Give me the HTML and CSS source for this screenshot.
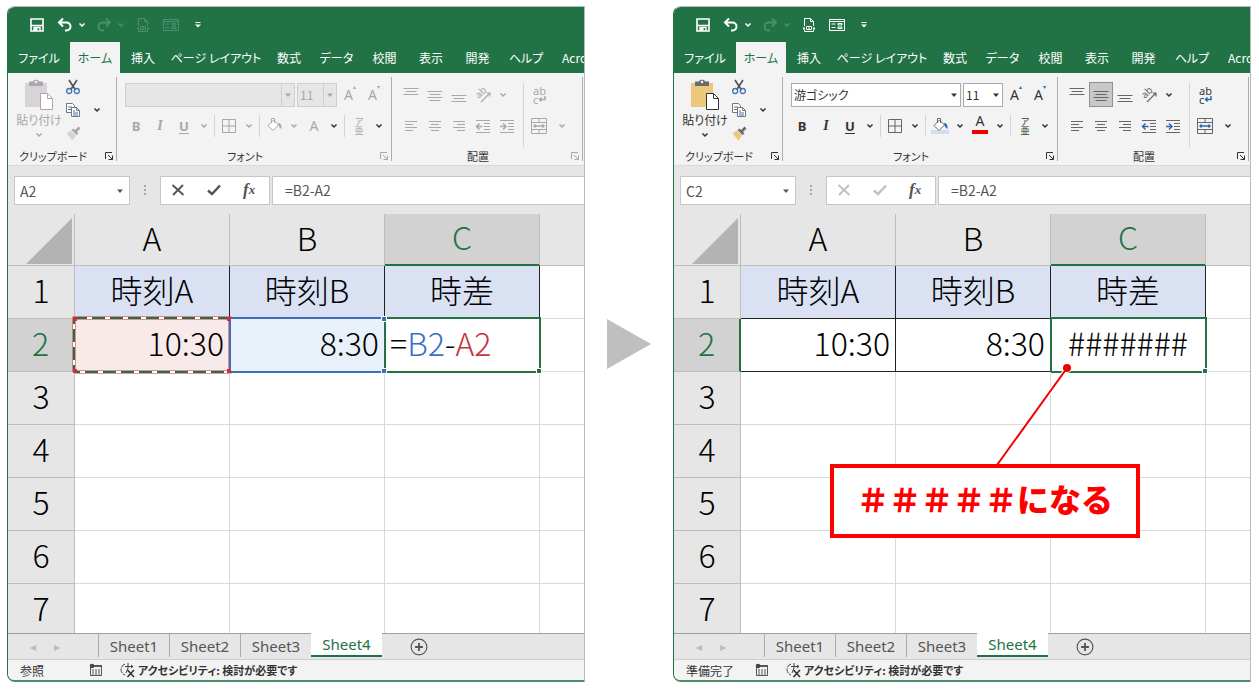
FILE: index.html
```html
<!DOCTYPE html>
<html lang="ja">
<head>
  <meta charset="UTF-8" />
  <meta name="viewport" content="width=device-width, initial-scale=1.0" />
  <title>時刻の差</title>
  <link rel="stylesheet" href="styles.css">
</head>
<body>
  <!-- shared icons -->
  <svg class="sprite" aria-hidden="true">
    <symbol id="i-save" viewBox="0 0 16 16"><path d="M2 2h12v12H2z" fill="none" stroke="currentColor" stroke-width="1.6"/><path d="M2 8.500h12M5 14v-3.500h6V14" fill="none" stroke="currentColor" stroke-width="1.400"/><path d="M5.500 11h3v3h-3z" fill="currentColor"/></symbol>
    <symbol id="i-undo" viewBox="0 0 16 16"><path d="M6 1.500L2 5.500l4 4M2.500 5.500h7a4 4 0 0 1 0 8H8" fill="none" stroke="currentColor" stroke-width="2"/></symbol>
    <symbol id="i-redo" viewBox="0 0 16 16"><path d="M10 1.500l4 4-4 4M13.500 5.500h-7a4 4 0 0 0 0 8H8" fill="none" stroke="currentColor" stroke-width="1.800"/></symbol>
    <symbol id="i-print" viewBox="0 0 16 16"><path d="M3.500 9V1.500h6l3 3V9M9.500 1.500v3h3M3.500 13v1.500h9V13" fill="none" stroke="currentColor"/><path d="M2 11.500h2M12 11.500h2" stroke="currentColor" stroke-width="2"/><path d="M5.500 9.500h5v3h-5zM8 9v4" fill="none" stroke="currentColor"/></symbol>
    <symbol id="i-form" viewBox="0 0 16 16"><path d="M.5 2.500h15v11H.5zM.5 4.500h15M2.500 7h4M2.500 10.500h4M9 6.500h4v1.500H9zM9 10h4v1.500H9z" fill="none" stroke="currentColor"/></symbol>
    <symbol id="i-more" viewBox="0 0 8 8"><path d="M1.500 1.500h5" stroke="currentColor"/><path d="M1 3.500h6L4 6.500z" fill="currentColor"/></symbol>
    <symbol id="i-chev" viewBox="0 0 8 8"><path d="M1.500 2.500L4 5l2.500-2.500" fill="none" stroke="currentColor" stroke-width="1.500"/></symbol>
    <symbol id="i-down" viewBox="0 0 8 8"><path d="M1 2.500h6L4 6z" fill="currentColor"/></symbol>
    <symbol id="i-paste" viewBox="0 0 28 32"><path class="board" d="M0 4h22v24H0z"/><path class="clip" d="M4 2.500h4C8 0 14 0 14 2.500h4V7H4z"/><circle cx="11" cy="3" r="1.300" fill="#f3f3f3"/><path d="M15.500 14.500h7l5 5v11h-12z" fill="#fff" stroke="currentColor"/><path d="M22.500 14.500v5h5" fill="none" stroke="currentColor"/></symbol>
    <symbol id="i-cut" viewBox="0 0 16 16"><path d="M4 1l6.500 10M12 1L5.500 11" stroke="#555" stroke-width="1.700"/><circle cx="4.200" cy="12" r="2.500" fill="none" stroke="#4472b4" stroke-width="1.300"/><circle cx="11.800" cy="12" r="2.500" fill="none" stroke="#4472b4" stroke-width="1.300"/></symbol>
    <symbol id="i-copy" viewBox="0 0 16 16"><path d="M1.500 1.500h6l2 2v7h-8z" fill="#fff" stroke="#777"/><path d="M3 5h4M3 7.500h3" stroke="#4472b4"/><path d="M6.500 5.500h5l3 3v6h-8z" fill="#fff" stroke="#777"/><path d="M11.500 5.500v3h3" fill="none" stroke="#777"/><path d="M8 9h2M8 11h5M8 13h5" stroke="#4472b4"/></symbol>
    <symbol id="i-brush" viewBox="0 0 16 16"><path class="bristle" d="M1.500 8.500L6 5.500l5 5-3.500 5z"/><path class="handle" d="M6.500 5l2-1.500L10 5l3.500-3.500 2 2L12 7l1.500 1.500-2 1.500z"/></symbol>
    <symbol id="i-launch" viewBox="0 0 10 10"><path d="M1.500 8V1.500H8M4 4l4.500 4.500M8.500 4.500v4h-4" fill="none" stroke="currentColor"/></symbol>
    <symbol id="i-border" viewBox="0 0 16 16"><path d="M1.500 1.500h13v13h-13zM8 1.500v13M1.500 8h13" fill="none" stroke="currentColor"/></symbol>
    <symbol id="i-fill" viewBox="0 0 18 18"><path class="bar" d="M0 13h18v4H0z"/><path d="M3 8.500L8.500 3l5 5L8 13.500zM6.500 6V1.500h3V6" fill="#fff" stroke="currentColor"/><path class="drop" d="M13 6c3 0 3.500 2 3.500 6-2-1-3-3-3.500-6z"/></symbol>
    <symbol id="i-top" viewBox="0 0 16 16"><path d="M.5 1.500h15M2.500 4.500h11M.5 7.500h15" stroke="currentColor"/></symbol>
    <symbol id="i-mid" viewBox="0 0 16 16"><path d="M.5 4.500h15M2.500 7.500h11M.5 10.500h15M2.500 13.500h11" stroke="currentColor"/></symbol>
    <symbol id="i-bottom" viewBox="0 0 16 16"><path d="M.5 8.500h15M2.500 11.500h11M.5 14.500h15" stroke="currentColor"/></symbol>
    <symbol id="i-left" viewBox="0 0 16 16"><path d="M2 3.500h12M2 6.500h8M2 9.500h12M2 12.500h8" stroke="currentColor"/></symbol>
    <symbol id="i-center" viewBox="0 0 16 16"><path d="M2 3.500h12M4 6.500h8M2 9.500h12M4 12.500h8" stroke="currentColor"/></symbol>
    <symbol id="i-right" viewBox="0 0 16 16"><path d="M2 3.500h12M6 6.500h8M2 9.500h12M6 12.500h8" stroke="currentColor"/></symbol>
    <symbol id="i-outdent" viewBox="0 0 16 16"><path d="M1 2.500h14M9 5.500h6M9 8.500h6M9 11.500h6M1 14.500h14" stroke="currentColor"/><path class="accent" d="M7.500 8.500H2M4.500 5.500l-3 3 3 3"/></symbol>
    <symbol id="i-indent" viewBox="0 0 16 16"><path d="M1 2.500h14M9 5.500h6M9 8.500h6M9 11.500h6M1 14.500h14" stroke="currentColor"/><path class="accent" d="M1 8.500h5.500M4 5.500l3 3-3 3"/></symbol>
    <symbol id="i-orient" viewBox="0 0 16 16"><text x="0" y="0" font-size="10" transform="translate(4 12) rotate(-45)" fill="currentColor">ab</text><path d="M6 15L15 6M11.500 6H15v3.500" fill="none" stroke="currentColor" stroke-width="1.200"/></symbol>
    <symbol id="i-return" viewBox="0 0 8 8"><path class="accent" d="M7 1v3.500H1.500M3.500 2.500l-2 2 2 2"/></symbol>
    <symbol id="i-merge" viewBox="0 0 16 16"><path d="M.5 .5h15v15H.5zM.5 4.500h15M.5 11.500h15M8 .5v4M8 11.500v4" fill="none" stroke="currentColor"/><path class="accent" d="M3 8h10M4.500 6.500L3 8l1.500 1.500M11.500 6.500L13 8l-1.500 1.500"/></symbol>
    <symbol id="i-x" viewBox="0 0 14 14"><path d="M1.500 2l11 10M12 2L2 12" stroke="currentColor" stroke-width="1.900"/></symbol>
    <symbol id="i-check" viewBox="0 0 14 14"><path d="M1 7.500L5 11l8-8.500" fill="none" stroke="currentColor" stroke-width="2.500"/></symbol>
    <symbol id="i-dots" viewBox="0 0 4 12"><path d="M1 1h2v2H1zM1 5h2v2H1zM1 9h2v2H1z" fill="#a6a6a6"/></symbol>
    <symbol id="i-plus" viewBox="0 0 16 16"><circle cx="8" cy="8" r="7" fill="none" stroke="currentColor"/><path d="M8 4.500v7M4.500 8h7" stroke="currentColor" stroke-width="1.600"/></symbol>
    <symbol id="i-macro" viewBox="0 0 14 14"><path d="M1.500 4v8.500h11V3M5 2.500h8" fill="none" stroke="#555"/><path d="M5 3h8" stroke="#555" stroke-width="2"/><circle cx="3" cy="3" r="2.300" fill="#444"/><path d="M3 7h8M3 9h8M3 11h8" stroke="#555" stroke-dasharray="2 1"/></symbol>
    <symbol id="i-access" viewBox="0 0 16 16"><path d="M5 2a5.800 5.800 0 0 0 0 11" fill="none" stroke="#444" stroke-dasharray="5 1"/><path d="M8 1v5M5 4.500h8M8 6l-2 5M11 3l2 1.500-2 1.500" fill="none" stroke="#444"/><path d="M7.500 8l6.500 7M14 8l-6.500 7" stroke="#333" stroke-width="1.600"/></symbol>
  </svg>

  <main class="compare">
    <section class="window editing">
      <div class="quick">
        <button aria-label="保存"><svg class="i16"><use href="#i-save"/></svg></button>
        <button class="undo" aria-label="元に戻す"><svg class="i16"><use href="#i-undo"/></svg><svg class="i8"><use href="#i-chev"/></svg></button>
        <button class="undo faint" aria-label="やり直し"><svg class="i16"><use href="#i-redo"/></svg><svg class="i8"><use href="#i-chev"/></svg></button>
        <button class="tool" aria-label="印刷プレビュー"><svg class="i16"><use href="#i-print"/></svg></button>
        <button class="tool" aria-label="フォーム"><svg class="i16"><use href="#i-form"/></svg></button>
        <button class="more" aria-label="カスタマイズ"><svg class="i8"><use href="#i-more"/></svg></button>
      </div>
      <nav class="tabs">
        <a href="#">ファイル</a><a href="#" class="active">ホーム</a><a href="#">挿入</a><a href="#">ページ レイアウト</a><a href="#">数式</a><a href="#">データ</a><a href="#">校閲</a><a href="#">表示</a><a href="#">開発</a><a href="#">ヘルプ</a><a href="#" class="last">Acrobat</a>
      </nav>
      <div class="ribbon">
        <div class="group clipboard">
          <div class="group-body">
            <button class="paste"><svg class="paste-icon"><use href="#i-paste"/></svg><span>貼り付け</span><svg class="i8"><use href="#i-chev"/></svg></button>
            <div class="clip-tools">
              <button aria-label="切り取り"><svg class="i16"><use href="#i-cut"/></svg></button>
              <button class="copy" aria-label="コピー"><svg class="i16"><use href="#i-copy"/></svg><svg class="i8"><use href="#i-chev"/></svg></button>
              <button class="brush" aria-label="書式のコピー"><svg class="i16"><use href="#i-brush"/></svg></button>
            </div>
          </div>
          <div class="group-foot"><span>クリップボード</span><button class="launch" aria-label="クリップボードの設定"><svg><use href="#i-launch"/></svg></button></div>
        </div>
        <div class="group font">
          <div class="group-body">
            <div class="row">
              <div class="combo family"><select aria-label="フォント" disabled><option></option></select><svg class="i8"><use href="#i-down"/></svg></div>
              <div class="combo size"><select aria-label="フォント サイズ" disabled><option>11</option></select><svg class="i8"><use href="#i-down"/></svg></div>
              <button class="btn grow">A<sup>▴</sup></button>
              <button class="btn grow">A<sup>▾</sup></button>
            </div>
            <div class="row">
              <button class="btn bold">B</button>
              <button class="btn italic">I</button>
              <button class="btn under">U</button>
              <button class="caret" aria-label="下線の種類"><svg class="i8"><use href="#i-chev"/></svg></button>
              <span class="sep"></span>
              <button class="btn" aria-label="罫線"><svg class="i16"><use href="#i-border"/></svg></button>
              <button class="caret" aria-label="罫線の種類"><svg class="i8"><use href="#i-chev"/></svg></button>
              <span class="sep"></span>
              <button class="btn" aria-label="塗りつぶし"><svg class="i18"><use href="#i-fill"/></svg></button>
              <button class="caret" aria-label="塗りつぶしの色"><svg class="i8"><use href="#i-chev"/></svg></button>
              <button class="btn color">A</button>
              <button class="caret on" aria-label="フォントの色"><svg class="i8"><use href="#i-chev"/></svg></button>
              <span class="sep"></span>
              <button class="btn ruby"><span>ア</span><span>亜</span></button>
              <button class="caret on" aria-label="ふりがな"><svg class="i8"><use href="#i-chev"/></svg></button>
            </div>
          </div>
          <div class="group-foot"><span>フォント</span><button class="launch" aria-label="フォントの設定"><svg><use href="#i-launch"/></svg></button></div>
        </div>
        <div class="group align">
          <div class="group-body">
            <div class="align-main">
              <div class="row">
                <button class="btn" aria-label="上揃え"><svg class="i16"><use href="#i-top"/></svg></button>
                <button class="btn middle" aria-label="上下中央揃え"><svg class="i16"><use href="#i-mid"/></svg></button>
                <button class="btn" aria-label="下揃え"><svg class="i16"><use href="#i-bottom"/></svg></button>
                <button class="btn" aria-label="方向"><svg class="i16"><use href="#i-orient"/></svg></button>
                <button class="caret" aria-label="方向の種類"><svg class="i8"><use href="#i-chev"/></svg></button>
              </div>
              <div class="row">
                <button class="btn" aria-label="左揃え"><svg class="i16"><use href="#i-left"/></svg></button>
                <button class="btn" aria-label="中央揃え"><svg class="i16"><use href="#i-center"/></svg></button>
                <button class="btn" aria-label="右揃え"><svg class="i16"><use href="#i-right"/></svg></button>
                <button class="btn" aria-label="インデントを減らす"><svg class="i16"><use href="#i-outdent"/></svg></button>
                <button class="btn" aria-label="インデントを増やす"><svg class="i16"><use href="#i-indent"/></svg></button>
              </div>
            </div>
            <div class="align-side">
              <div class="row"><button class="btn wrap"><span>ab</span><span>c<svg class="i8"><use href="#i-return"/></svg></span></button></div>
              <div class="row"><button class="btn" aria-label="セルを結合"><svg class="i16"><use href="#i-merge"/></svg></button><button class="caret" aria-label="結合の種類"><svg class="i8"><use href="#i-chev"/></svg></button></div>
            </div>
          </div>
          <div class="group-foot"><span>配置</span><button class="launch" aria-label="配置の設定"><svg><use href="#i-launch"/></svg></button></div>
        </div>
      </div>
      <div class="formula-bar">
        <div class="name-box"><input type="text" aria-label="名前ボックス" value="A2"><svg class="i8"><use href="#i-down"/></svg></div>
        <svg class="dots"><use href="#i-dots"/></svg>
        <div class="fx-buttons">
          <button class="entry" aria-label="キャンセル"><svg><use href="#i-x"/></svg></button>
          <button class="entry" aria-label="入力"><svg><use href="#i-check"/></svg></button>
          <button class="fx">f<small>x</small></button>
        </div>
        <input class="formula" type="text" aria-label="数式バー" value="=B2-A2">
      </div>
      <div class="sheet">
        <table>
          <colgroup><col class="c-num"><col class="c-data"><col class="c-data"><col class="c-data"><col></colgroup>
          <thead>
            <tr><th class="corner"><svg viewBox="0 0 46 46"><path d="M46 0v46H0z" fill="#b3b3b3"/></svg></th><th>A</th><th>B</th><th class="sel">C</th><th></th></tr>
          </thead>
          <tbody>
            <tr class="titles"><th>1</th><td>時刻A</td><td>時刻B</td><td>時差</td><td></td></tr>
            <tr class="values"><th class="sel">2</th>
              <td class="ref-a">10:30<svg class="ants"><rect class="red" width="100%" height="100%"/><rect class="white" width="100%" height="100%"/><rect class="dash" width="100%" height="100%"/></svg><i class="knob tl"></i><i class="knob tr"></i><i class="knob bl"></i><i class="knob br"></i></td>
              <td class="ref-b">8:30<i class="ring"></i><i class="knob tr"></i><i class="knob br"></i></td>
              <td class="cursor typing">=<span class="blue">B2</span>-<span class="red">A2</span><i class="ring"></i><i class="knob br"></i></td><td></td></tr>
            <tr><th>3</th><td></td><td></td><td></td><td></td></tr>
            <tr><th>4</th><td></td><td></td><td></td><td></td></tr>
            <tr><th>5</th><td></td><td></td><td></td><td></td></tr>
            <tr><th>6</th><td></td><td></td><td></td><td></td></tr>
            <tr><th>7</th><td></td><td></td><td></td><td></td></tr>
          </tbody>
        </table>
      </div>
      <div class="sheet-tabs">
        <div class="arrows"><span>◂</span><span>▸</span></div>
        <button>Sheet1</button><button>Sheet2</button><button>Sheet3</button><button class="active">Sheet4</button>
        <button class="add" aria-label="新しいシート"><svg class="i18"><use href="#i-plus"/></svg></button>
      </div>
      <footer class="status"><span class="mode">参照</span><svg class="i14"><use href="#i-macro"/></svg><svg class="i16 access"><use href="#i-access"/></svg><strong>アクセシビリティ: 検討が必要です</strong></footer>
    </section>

    <svg class="arrow" viewBox="0 0 44 50"><path d="M0 0l44 25L0 50z" fill="#bfbfbf"/></svg>

    <section class="window result">
      <div class="quick">
        <button aria-label="保存"><svg class="i16"><use href="#i-save"/></svg></button>
        <button class="undo" aria-label="元に戻す"><svg class="i16"><use href="#i-undo"/></svg><svg class="i8"><use href="#i-chev"/></svg></button>
        <button class="undo faint" aria-label="やり直し"><svg class="i16"><use href="#i-redo"/></svg><svg class="i8"><use href="#i-chev"/></svg></button>
        <button class="tool" aria-label="印刷プレビュー"><svg class="i16"><use href="#i-print"/></svg></button>
        <button class="tool" aria-label="フォーム"><svg class="i16"><use href="#i-form"/></svg></button>
        <button class="more" aria-label="カスタマイズ"><svg class="i8"><use href="#i-more"/></svg></button>
      </div>
      <nav class="tabs">
        <a href="#">ファイル</a><a href="#" class="active">ホーム</a><a href="#">挿入</a><a href="#">ページ レイアウト</a><a href="#">数式</a><a href="#">データ</a><a href="#">校閲</a><a href="#">表示</a><a href="#">開発</a><a href="#">ヘルプ</a><a href="#" class="last">Acrobat</a>
      </nav>
      <div class="ribbon">
        <div class="group clipboard">
          <div class="group-body">
            <button class="paste"><svg class="paste-icon"><use href="#i-paste"/></svg><span>貼り付け</span><svg class="i8"><use href="#i-chev"/></svg></button>
            <div class="clip-tools">
              <button aria-label="切り取り"><svg class="i16"><use href="#i-cut"/></svg></button>
              <button class="copy" aria-label="コピー"><svg class="i16"><use href="#i-copy"/></svg><svg class="i8"><use href="#i-chev"/></svg></button>
              <button class="brush" aria-label="書式のコピー"><svg class="i16"><use href="#i-brush"/></svg></button>
            </div>
          </div>
          <div class="group-foot"><span>クリップボード</span><button class="launch" aria-label="クリップボードの設定"><svg><use href="#i-launch"/></svg></button></div>
        </div>
        <div class="group font">
          <div class="group-body">
            <div class="row">
              <div class="combo family"><select aria-label="フォント"><option>游ゴシック</option></select><svg class="i8"><use href="#i-down"/></svg></div>
              <div class="combo size"><select aria-label="フォント サイズ"><option>11</option></select><svg class="i8"><use href="#i-down"/></svg></div>
              <button class="btn grow">A<sup>▴</sup></button>
              <button class="btn grow">A<sup>▾</sup></button>
            </div>
            <div class="row">
              <button class="btn bold">B</button>
              <button class="btn italic">I</button>
              <button class="btn under">U</button>
              <button class="caret" aria-label="下線の種類"><svg class="i8"><use href="#i-chev"/></svg></button>
              <span class="sep"></span>
              <button class="btn" aria-label="罫線"><svg class="i16"><use href="#i-border"/></svg></button>
              <button class="caret" aria-label="罫線の種類"><svg class="i8"><use href="#i-chev"/></svg></button>
              <span class="sep"></span>
              <button class="btn" aria-label="塗りつぶし"><svg class="i18"><use href="#i-fill"/></svg></button>
              <button class="caret" aria-label="塗りつぶしの色"><svg class="i8"><use href="#i-chev"/></svg></button>
              <button class="btn color">A</button>
              <button class="caret on" aria-label="フォントの色"><svg class="i8"><use href="#i-chev"/></svg></button>
              <span class="sep"></span>
              <button class="btn ruby"><span>ア</span><span>亜</span></button>
              <button class="caret on" aria-label="ふりがな"><svg class="i8"><use href="#i-chev"/></svg></button>
            </div>
          </div>
          <div class="group-foot"><span>フォント</span><button class="launch" aria-label="フォントの設定"><svg><use href="#i-launch"/></svg></button></div>
        </div>
        <div class="group align">
          <div class="group-body">
            <div class="align-main">
              <div class="row">
                <button class="btn" aria-label="上揃え"><svg class="i16"><use href="#i-top"/></svg></button>
                <button class="btn middle" aria-label="上下中央揃え"><svg class="i16"><use href="#i-mid"/></svg></button>
                <button class="btn" aria-label="下揃え"><svg class="i16"><use href="#i-bottom"/></svg></button>
                <button class="btn" aria-label="方向"><svg class="i16"><use href="#i-orient"/></svg></button>
                <button class="caret" aria-label="方向の種類"><svg class="i8"><use href="#i-chev"/></svg></button>
              </div>
              <div class="row">
                <button class="btn" aria-label="左揃え"><svg class="i16"><use href="#i-left"/></svg></button>
                <button class="btn" aria-label="中央揃え"><svg class="i16"><use href="#i-center"/></svg></button>
                <button class="btn" aria-label="右揃え"><svg class="i16"><use href="#i-right"/></svg></button>
                <button class="btn" aria-label="インデントを減らす"><svg class="i16"><use href="#i-outdent"/></svg></button>
                <button class="btn" aria-label="インデントを増やす"><svg class="i16"><use href="#i-indent"/></svg></button>
              </div>
            </div>
            <div class="align-side">
              <div class="row"><button class="btn wrap"><span>ab</span><span>c<svg class="i8"><use href="#i-return"/></svg></span></button></div>
              <div class="row"><button class="btn" aria-label="セルを結合"><svg class="i16"><use href="#i-merge"/></svg></button><button class="caret" aria-label="結合の種類"><svg class="i8"><use href="#i-chev"/></svg></button></div>
            </div>
          </div>
          <div class="group-foot"><span>配置</span><button class="launch" aria-label="配置の設定"><svg><use href="#i-launch"/></svg></button></div>
        </div>
      </div>
      <div class="formula-bar">
        <div class="name-box"><input type="text" aria-label="名前ボックス" value="C2"><svg class="i8"><use href="#i-down"/></svg></div>
        <svg class="dots"><use href="#i-dots"/></svg>
        <div class="fx-buttons">
          <button class="entry" aria-label="キャンセル"><svg><use href="#i-x"/></svg></button>
          <button class="entry" aria-label="入力"><svg><use href="#i-check"/></svg></button>
          <button class="fx">f<small>x</small></button>
        </div>
        <input class="formula" type="text" aria-label="数式バー" value="=B2-A2">
      </div>
      <div class="sheet">
        <table>
          <colgroup><col class="c-num"><col class="c-data"><col class="c-data"><col class="c-data"><col></colgroup>
          <thead>
            <tr><th class="corner"><svg viewBox="0 0 46 46"><path d="M46 0v46H0z" fill="#b3b3b3"/></svg></th><th>A</th><th>B</th><th class="sel">C</th><th></th></tr>
          </thead>
          <tbody>
            <tr class="titles"><th>1</th><td>時刻A</td><td>時刻B</td><td>時差</td><td></td></tr>
            <tr class="values"><th class="sel">2</th><td>10:30</td><td>8:30</td><td class="cursor hashes">#######<i class="ring"></i><i class="knob br"></i></td><td></td></tr>
            <tr><th>3</th><td></td><td></td><td></td><td></td></tr>
            <tr><th>4</th><td></td><td></td><td></td><td></td></tr>
            <tr><th>5</th><td></td><td></td><td></td><td></td></tr>
            <tr><th>6</th><td></td><td></td><td></td><td></td></tr>
            <tr><th>7</th><td></td><td></td><td></td><td></td></tr>
          </tbody>
        </table>
      </div>
      <div class="sheet-tabs">
        <div class="arrows"><span>◂</span><span>▸</span></div>
        <button>Sheet1</button><button>Sheet2</button><button>Sheet3</button><button class="active">Sheet4</button>
        <button class="add" aria-label="新しいシート"><svg class="i18"><use href="#i-plus"/></svg></button>
      </div>
      <footer class="status"><span class="mode">準備完了</span><svg class="i14"><use href="#i-macro"/></svg><svg class="i16 access"><use href="#i-access"/></svg><strong>アクセシビリティ: 検討が必要です</strong></footer>

      <svg class="pointer" viewBox="0 0 80 104"><path d="M74 5L4 102" stroke="#fff" stroke-width="4"/><circle cx="74" cy="5" r="5" fill="#fff"/><path d="M74 5L4 102" stroke="#f00000" stroke-width="2"/><circle cx="74" cy="5" r="4" fill="#f00000"/></svg>
      <div class="callout">＃＃＃＃＃になる</div>
    </section>
  </main>
</body>
</html>
```
FILE: styles.css
```css
* {
  box-sizing: border-box;
}
body {
  margin: 0;
  background: #fff;
  color: #333;
  font-family: "Noto Sans CJK JP", sans-serif;
  font-size: 12px;
  font-feature-settings: "palt";
}
button, input, select {
  font: inherit;
  font-feature-settings: inherit;
  color: inherit;
  border: none;
  background: none;
  padding: 0;
  margin: 0;
}
button {
  display: flex;
  align-items: center;
  justify-content: center;
  white-space: nowrap;
}
svg {
  display: block;
  flex: none;
}
.sprite {
  position: absolute;
  width: 0;
  height: 0;
}
.i8 { width: 8px; height: 8px; }
.i14 { width: 14px; height: 14px; }
.i16 { width: 16px; height: 16px; }
.i18 { width: 18px; height: 18px; }

.compare {
  display: grid;
  grid-template-columns: minmax(0, 1fr) 88px minmax(0, 1fr);
  grid-template-rows: minmax(0, 1fr);
  height: 100vh;
  padding: 6px 8px 7px 7px;
}
.arrow {
  width: 44px;
  height: 50px;
  align-self: center;
  justify-self: center;
}
.window {
  --board: #edc77c;
  --clip: #6b6b6b;
  --bar: #cfdff3;
  --accent: #3268b5;
  position: relative;
  display: flex;
  flex-direction: column;
  min-width: 0;
  border: 1px solid #b5bdb8;
  border-left-color: #217346;
  border-bottom: 2px solid #4f8a68;
  border-radius: 8px 0 0 8px;
  background: #e6e6e6;
}
/* greyed out while a formula is being typed */
.editing {
  --board: #d9d3d9;
  --clip: #aaa;
  --bar: transparent;
  --accent: #a8a8a8;
}

/* title bar */
.quick {
  display: flex;
  align-items: center;
  gap: 12px;
  height: 35px;
  padding-left: 21px;
  background: #217346;
  color: #fff;
  border-top-left-radius: 7px;
}
.quick .undo {
  gap: 5px;
  margin-right: -2px;
}
.quick .faint,
.editing .tool {
  color: #4d8f6b;
}
.quick .more {
  margin-left: 3px;
}
.tabs {
  display: grid;
  grid-template-columns: 62px 50px 46px 100px 46px 49px 47px 46px 47px 50px minmax(0, 1fr);
  height: 31px;
  background: #217346;
  overflow: hidden;
}
.tabs a {
  display: flex;
  align-items: center;
  justify-content: center;
  color: #fff;
  text-decoration: none;
  white-space: nowrap;
}
.tabs .active {
  background: #f3f3f3;
  color: #217346;
}
.tabs .last {
  justify-content: flex-start;
  padding-left: 11px;
}

/* ribbon */
.ribbon {
  display: flex;
  height: 93px;
  background: #f3f3f3;
  border-bottom: 1px solid #dadada;
  overflow: hidden;
}
.group {
  display: flex;
  flex-direction: column;
  flex: none;
  margin-top: 4px;
  background: linear-gradient(#ababab, #ababab) right top / 1px 84px no-repeat;
}
.clipboard { width: 109px; }
.font { width: 275px; }
.align { width: 191px; }
.group-body {
  flex: 1;
}
.group-foot {
  display: flex;
  align-items: center;
  height: 18px;
  padding-right: 3px;
  font-size: 11px;
  line-height: 18px;
}
.group-foot span {
  flex: 1;
  padding-right: 6px;
  text-align: center;
  white-space: nowrap;
}
.launch svg {
  width: 10px;
  height: 10px;
}
.clipboard .group-body {
  display: flex;
  padding: 2px 0 0 9px;
  gap: 4px;
}
.paste {
  width: 44px;
  flex-direction: column;
  justify-content: flex-start;
  line-height: 18px;
}
.paste-icon {
  width: 28px;
  height: 32px;
}
.paste .i8 {
  margin-top: 2px;
}
.board, .bristle { fill: var(--board); }
.clip, .handle { fill: var(--clip); }
.clip-tools {
  display: flex;
  flex-direction: column;
  gap: 7px;
  align-items: flex-start;
}
.copy {
  gap: 12px;
}
.font .group-body {
  display: flex;
  flex-direction: column;
  gap: 8px;
  padding: 6px 0 0 8px;
}
.row {
  display: flex;
  align-items: center;
  gap: 2px;
  height: 23px;
}
.combo {
  display: flex;
  align-items: center;
  height: 24px;
  padding: 0 2px;
  border: 1px solid #ababab;
  background: #fff;
}
.combo select {
  flex: 1;
  min-width: 0;
  height: 20px;
  appearance: none;
  opacity: 1;
}
.family {
  width: 170px;
}
.size {
  width: 40px;
}
.btn {
  position: relative;
  width: 22px;
  height: 23px;
  font-family: "Noto Sans", "Noto Sans CJK JP", sans-serif;
  font-size: 14px;
  line-height: 14px;
}
.result .btn svg {
  color: #666;
}
.caret {
  width: 14px;
  height: 22px;
}
.sep {
  width: 1px;
  height: 22px;
  margin: 0 1px;
  background: #d4d4d4;
}
.grow sup {
  align-self: flex-start;
  font-size: 6px;
  line-height: 8px;
  color: var(--accent);
}
.bold { font-weight: 700; font-size: 13px; }
.italic {
  font-family: "Liberation Serif", serif;
  font-style: italic;
  font-weight: 700;
}
.under {
  font-weight: 700;
  font-size: 13px;
  text-decoration: underline;
  text-underline-offset: 2px;
}
.result .color {
  align-items: flex-start;
}
.result .color::after {
  content: "";
  position: absolute;
  left: 3px;
  right: 3px;
  bottom: 3px;
  height: 4px;
  background: #f00000;
}
.ruby, .wrap {
  flex-direction: column;
  font-size: 9px;
  line-height: 9px;
}
.wrap {
  align-items: flex-start;
  font-size: 11px;
  padding-left: 5px;
}
.wrap span {
  display: flex;
  align-items: center;
}
.bar { fill: var(--bar); }
.drop { fill: var(--accent); }
.accent {
  fill: none;
  stroke: var(--accent);
  stroke-width: 1.5;
}
.align .group-body {
  display: flex;
  padding: 6px 0 0 8px;
}
.align-main, .align-side {
  display: flex;
  flex-direction: column;
  gap: 8px;
}
.align-main {
  width: 124px;
  border-right: 1px solid #d4d4d4;
}
.align-side {
  padding-left: 4px;
}
.align-side .row {
  gap: 5px;
}
.result .middle {
  background: #c8c8c8;
  outline: 1px solid #8f8f8f;
}
.editing .paste,
.editing .row,
.editing .font .launch,
.editing .align .launch {
  color: #a8a8a8;
}
.editing .combo {
  background: #e6e6e6;
  border-color: #cfcfcf;
}
.editing .combo .i8 {
  box-sizing: content-box;
  padding: 7px 0 7px 2px;
  border-left: 1px solid #cfcfcf;
}
.editing .on { color: #333; }

/* formula bar */
.formula-bar {
  display: flex;
  align-items: center;
  height: 48px;
  padding-left: 6px;
  color: #555;
}
.name-box, .fx-buttons, .formula {
  height: 29px;
  background: #fff;
  border: 1px solid #c6c6c6;
}
.name-box {
  display: flex;
  align-items: center;
  width: 116px;
  padding: 2px 5px 0;
  font-size: 14px;
}
.name-box input {
  flex: 1;
  min-width: 0;
}
.dots {
  width: 4px;
  height: 12px;
  margin: 0 13px;
}
.fx-buttons {
  display: flex;
  align-items: center;
  gap: 22px;
  width: 110px;
  padding: 0 10px;
}
.fx-buttons svg {
  width: 14px;
  height: 14px;
}
.result .entry {
  color: #c0c0c0;
}
.fx {
  font: italic bold 17px "Liberation Serif", serif;
}
.fx small {
  font-size: 13px;
}
.formula {
  flex: 1;
  min-width: 0;
  margin-left: 2px;
  padding: 0 12px;
  border-right: none;
  font-size: 14px;
}

/* grid */
.sheet {
  flex: 1;
  min-height: 0;
  overflow: hidden;
  background: #fff;
}
.sheet table {
  width: 100%;
  table-layout: fixed;
  border-collapse: separate;
  border-spacing: 0;
  font-size: 32px;
  font-weight: 300;
  line-height: 40px;
  color: #000;
}
.c-num { width: 67px; }
.c-data { width: 155px; }
.sheet th, .sheet td {
  position: relative;
  height: 53px;
  padding: 0 0 6px;
  border-right: 1px solid #d9d9d9;
  border-bottom: 1px solid #d9d9d9;
  font-weight: 300;
  white-space: nowrap;
}
.sheet th:last-child, .sheet td:last-child {
  border-right: none;
}
.sheet th {
  background: #e6e6e6;
  border-color: #bdbdbd;
}
.sheet thead th {
  height: 52px;
}
.sheet th.sel {
  background: #d2d2d2;
  color: #217346;
}
.sheet thead .sel {
  border-bottom: 2px solid #217346;
}
.sheet tbody .sel {
  border-right: 2px solid #217346;
}
.sheet .corner {
  padding: 0;
}
.corner svg {
  width: 46px;
  height: 46px;
  margin: 2px 2px 0 auto;
}
.titles td {
  text-align: center;
}
.titles td:not(:last-child) {
  background: #d9e1f2;
  border-color: #222;
}
.sheet .values td {
  text-align: right;
  padding-right: 5px;
}
.result .values td:not(:last-child) {
  border-color: #222;
}
.sheet .values .typing {
  text-align: left;
  padding-left: 5px;
}
.sheet .values .hashes {
  text-align: center;
  padding-right: 0;
}
.blue { color: #3c6fc4; }
.typing .red { color: #c8323c; }
.ref-a { background: #f9eaea; }
.ref-b { background: #e8f0fa; }
.ring {
  position: absolute;
  inset: -2px -2px -2px -1px;
  border: 2px solid #217346;
}
.ref-b .ring {
  border-color: #3c6fb8;
}
.ants {
  position: absolute;
  inset: -1px;
  width: calc(100% + 2px);
  height: calc(100% + 2px);
  overflow: visible;
}
.ants rect {
  fill: none;
  stroke-width: 2;
}
.ants .red { stroke: #c8323c; stroke-width: 3; }
.ants .white { stroke: #fff; }
.ants .dash { stroke: #217346; stroke-dasharray: 13 5; }
.knob {
  position: absolute;
  z-index: 1;
  width: 4px;
  height: 4px;
  background: #217346;
  outline: 1px solid #fff;
}
.ref-a .knob { background: #c8323c; outline: none; }
.ref-b .knob { background: #3c6fb8; }
.tl { left: -2px; top: -2px; }
.tr { right: -2px; top: -2px; }
.bl { left: -2px; bottom: -2px; }
.br { right: -2px; bottom: -2px; }

/* bottom bars */
.sheet-tabs {
  display: flex;
  height: 26px;
  border-top: 1px solid #8fa89b;
  font-family: "Noto Sans", sans-serif;
  font-size: 15px;
  color: #555;
}
.arrows {
  display: flex;
  align-items: center;
  gap: 18px;
  width: 90px;
  padding-left: 22px;
  color: #bbb;
  font-size: 12px;
}
.sheet-tabs button {
  width: 71px;
  height: 23px;
  border-left: 1px solid #ababab;
}
.sheet-tabs .active {
  margin-top: -1px;
  height: 24px;
  background: #fff;
  color: #217346;
  border-left: none;
  border-bottom: 2px solid #217346;
}
.sheet-tabs .add {
  width: 18px;
  height: 26px;
  margin-left: 28px;
  border: none;
}
.status {
  display: flex;
  align-items: center;
  height: 21px;
  padding-left: 12px;
  background: #f3f3f3;
  border-top: 1px solid #cfcfcf;
  border-bottom-left-radius: 6px;
}
.mode {
  width: 69px;
}
.status strong {
  margin-left: 2px;
  font-size: 11px;
}
.access {
  margin-left: 17px;
}

/* note over the result window */
.pointer {
  position: absolute;
  left: 319px;
  top: 356px;
  width: 80px;
  height: 104px;
}
.callout {
  position: absolute;
  left: 156px;
  top: 457px;
  width: 310px;
  height: 74px;
  border: 4px solid #fe0000;
  background: #fff;
  color: #fe0000;
  font-size: 32px;
  font-weight: 900;
  line-height: 60px;
  text-align: center;
  white-space: nowrap;
  font-feature-settings: normal;
}
```
